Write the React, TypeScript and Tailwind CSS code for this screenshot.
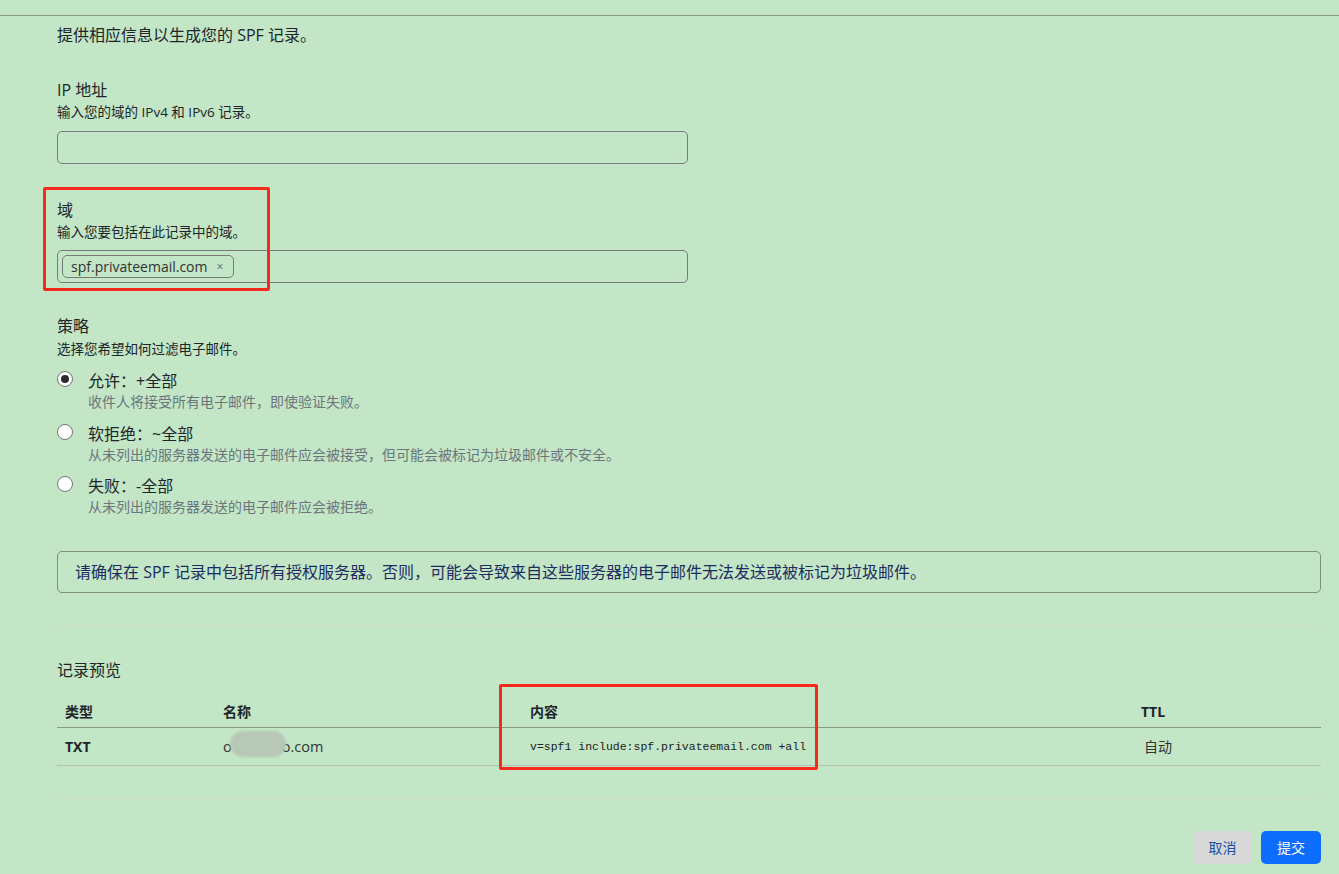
import React from 'react';

const policies = [
  { label: '允许：+全部', desc: '收件人将接受所有电子邮件，即使验证失败。', checked: true },
  { label: '软拒绝：~全部', desc: '从未列出的服务器发送的电子邮件应会被接受，但可能会被标记为垃圾邮件或不安全。', checked: false },
  { label: '失败：-全部', desc: '从未列出的服务器发送的电子邮件应会被拒绝。', checked: false },
];

const Radio = ({ checked }: { checked: boolean }) => (
  <span className="mt-[1px] flex h-[16px] w-[16px] shrink-0 items-center justify-center rounded-full border border-[#767676] bg-white">
    {checked && <span className="h-[8px] w-[8px] rounded-full bg-[#2b2b2b]" />}
  </span>
);

export default function App() {
  return (
    <div className="relative min-h-[874px] w-full bg-[#c2e6c6] font-['Open_Sans','Noto_Sans_CJK_SC',sans-serif] text-[#212529]">
      <div className="h-[15px]" />
      <div className="border-t border-[#889a8a]" />

      <div className="pl-[57px] pr-[18px]">
        <p className="pt-[8px] text-[16px] leading-[22px]">提供相应信息以生成您的 SPF 记录。</p>

        {/* IP */}
        <div className="mt-[34px]">
          <div className="text-[16px] leading-[20px]">IP 地址</div>
          <div className="mt-[3px] text-[13.5px] leading-[18px]">输入您的域的 IPv4 和 IPv6 记录。</div>
          <div className="mt-[10px] h-[33px] w-[631px] rounded-[5px] border border-[#7a7a7a]" />
        </div>

        {/* Domain */}
        <div className="mt-[36px]">
          <div className="text-[16px] leading-[20px]">域</div>
          <div className="mt-[3px] text-[13.5px] leading-[18px]">输入您要包括在此记录中的域。</div>
          <div className="mt-[9px] flex h-[33px] w-[631px] items-center rounded-[5px] border border-[#7a7a7a] px-[4px]">
            <span className="flex h-[23px] items-center gap-[9px] rounded-[5px] border border-[#7a7a7a] pl-[8px] pr-[10px] text-[14px] text-[#333]">
              spf.privateemail.com
              <span className="text-[12px] text-[#666]">×</span>
            </span>
          </div>
        </div>

        {/* Policy */}
        <div className="mt-[33px]">
          <div className="text-[16px] leading-[20px]">策略</div>
          <div className="mt-[3px] text-[13.5px] leading-[20px]">选择您希望如何过滤电子邮件。</div>
          <div className="mt-[11px] flex flex-col gap-[10.5px]">
            {policies.map((p) => (
              <div key={p.label} className="flex gap-[15px]">
                <Radio checked={p.checked} />
                <div>
                  <div className="text-[16px] leading-[22px]">{p.label}</div>
                  <div className="text-[14px] leading-[20px] text-[#6c757d]">{p.desc}</div>
                </div>
              </div>
            ))}
          </div>
        </div>

        {/* Alert */}
        <div className="mt-[34px] flex h-[42px] items-center rounded-[5px] border border-[#7d8f80] px-[17px] text-[16px] text-[#1d2b5e]">
          请确保在 SPF 记录中包括所有授权服务器。否则，可能会导致来自这些服务器的电子邮件无法发送或被标记为垃圾邮件。
        </div>

        <div className="mt-[33px] border-t border-[#d2dbd2]" />

        {/* Preview */}
        <div className="mt-[32px] text-[16px] leading-[22px]">记录预览</div>
        <div className="mt-[15px]">
          <div className="grid h-[32px] grid-cols-[158px_307px_611px_1fr] items-center border-b border-[#889a8a] text-[14px] font-bold">
            <div className="px-[8px]">类型</div>
            <div className="px-[8px]">名称</div>
            <div className="px-[8px]">内容</div>
            <div className="px-[8px]">TTL</div>
          </div>
          <div className="grid h-[38px] grid-cols-[158px_307px_611px_1fr] items-center border-b border-[#b8bfb8]">
            <div className="px-[8px] text-[14px] font-bold">TXT</div>
            <div className="relative px-[8px] text-[14.5px] text-[#333]">
              o<span className="inline-block w-[50px]" />o.com
              <span className="absolute left-[15px] top-[-5px] h-[26px] w-[56px] rounded-full bg-[#b7c8b7] blur-[1px]" />
            </div>
            <div className="px-[8px] font-['Liberation_Mono',monospace] text-[11.5px] text-[#222]">v=spf1 include:spf.privateemail.com +all</div>
            <div className="px-[11px] text-[14px] text-[#333]">自动</div>
          </div>
        </div>

        <div className="mt-[32px] border-t border-[#d2dbd2]" />

        <div className="mt-[32px] flex justify-end gap-[9px]">
          <button className="h-[33px] w-[59px] rounded-[5px] bg-[#d8d8d8] text-[14px] text-[#1d4fa0]">取消</button>
          <button className="h-[33px] w-[60px] rounded-[5px] bg-[#0d6efd] text-[14px] text-white">提交</button>
        </div>
      </div>

      {/* annotation boxes */}
      <div className="absolute left-[43px] top-[187px] h-[104px] w-[227px] rounded-[2px] border-[3px] border-[#f5291c]" />
      <div className="absolute left-[499px] top-[684px] h-[86px] w-[319px] rounded-[2px] border-[3px] border-[#f5291c]" />
    </div>
  );
}
